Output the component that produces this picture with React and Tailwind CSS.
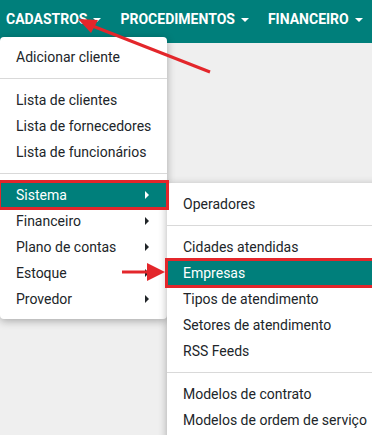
import React from 'react';

const TEAL = 'bg-[#007f7b]';

const Caret = ({ light }) => (
  <span
    className={`ml-auto mr-[2px] h-0 w-0 border-y-[4px] border-l-[4px] border-y-transparent ${
      light ? 'border-l-white' : 'border-l-[#212529]'
    }`}
  />
);

const Item = ({ label, sub, active }) => (
  <div
    className={`flex h-[26px] items-center whitespace-nowrap px-4 text-[14px] ${
      active
        ? `${TEAL} text-white outline-[3px] -outline-offset-1 outline-[#e3262b] relative z-10`
        : 'text-[#212529]'
    }`}
  >
    <span>{label}</span>
    {sub && <Caret light={active} />}
  </div>
);

const Divider = () => <div className="my-2 h-px bg-[#d9d9d9]" />;

const NavLink = ({ label }) => (
  <div className="flex items-center gap-[6px] text-[14px] font-bold text-white">
    <span>{label}</span>
    <span className="h-0 w-0 border-x-[4px] border-t-[4px] border-x-transparent border-t-white" />
  </div>
);

const App = () => {
  return (
    <div
      className="relative h-[435px] w-[372px] overflow-hidden bg-[#efefef]"
      style={{ fontFamily: 'Roboto, "Liberation Sans", sans-serif' }}
    >
      <div className={`flex h-[43px] items-start gap-[19px] pl-[6px] pt-[9px] ${TEAL}`}>
        <NavLink label="CADASTROS" />
        <NavLink label="PROCEDIMENTOS" />
        <NavLink label="FINANCEIRO" />
      </div>

      <div className="absolute left-0 top-[37px] w-[167px] rounded-[4px] bg-white py-[7px] shadow-[0_2px_8px_rgba(0,0,0,0.3)]">
        <Item label="Adicionar cliente" />
        <Divider />
        <Item label="Lista de clientes" />
        <Item label="Lista de fornecedores" />
        <Item label="Lista de funcionários" />
        <Divider />
        <Item label="Sistema" sub active />
        <Item label="Financeiro" sub />
        <Item label="Plano de contas" sub />
        <Item label="Estoque" sub />
        <Item label="Provedor" sub />
      </div>

      <div className="absolute left-[167px] top-[183px] w-[230px] rounded-[4px] bg-white py-2 shadow-[0_2px_8px_rgba(0,0,0,0.3)]">
        <Item label="Operadores" />
        <Divider />
        <Item label="Cidades atendidas" />
        <Item label="Empresas" active />
        <Item label="Tipos de atendimento" />
        <Item label="Setores de atendimento" />
        <Item label="RSS Feeds" />
        <Divider />
        <Item label="Modelos de contrato" />
        <Item label="Modelos de ordem de serviço" />
      </div>

      <svg className="pointer-events-none absolute left-0 top-0 z-20" width="372" height="435">
        <line x1="210" y1="72" x2="90" y2="25" stroke="#e3262b" strokeWidth="3" />
        <polygon points="78,19 98,20 91,33" fill="#e3262b" />
        <line x1="122" y1="272" x2="150" y2="272" stroke="#e3262b" strokeWidth="3" />
        <polygon points="147,263 165,272 147,281" fill="#e3262b" />
      </svg>
    </div>
  );
};

export default App;
